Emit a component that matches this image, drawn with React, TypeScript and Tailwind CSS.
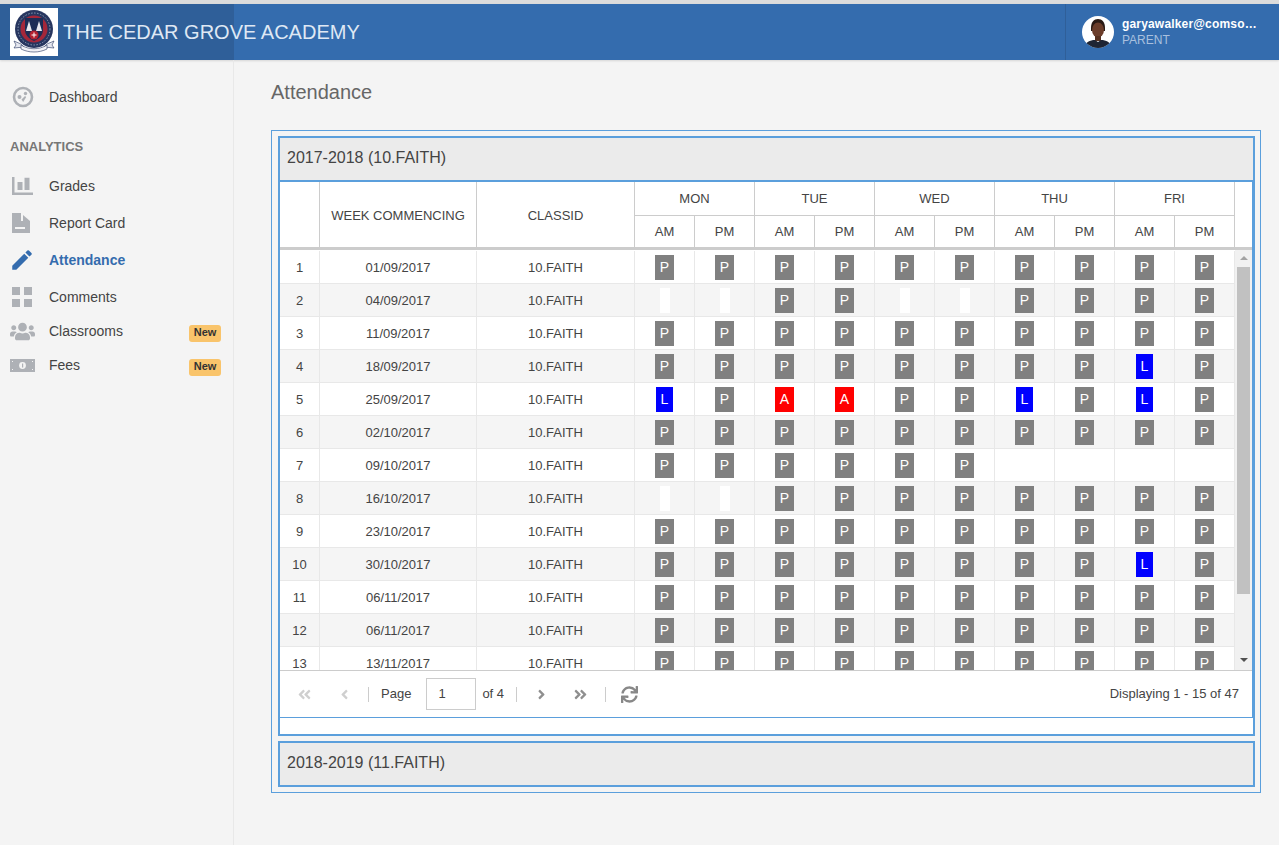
import type { ReactNode } from "react";
import { FaAngleDoubleLeft, FaAngleDoubleRight, FaAngleLeft, FaAngleRight, FaSync, FaUsers } from "react-icons/fa";
import { MdEdit } from "react-icons/md";

type Mark = "P" | "L" | "A" | "" | null;

const P: Mark[] = ["P", "P", "P", "P", "P", "P", "P", "P", "P", "P"];

const rows: { date: string; marks: Mark[] }[] = [
  { date: "01/09/2017", marks: P },
  { date: "04/09/2017", marks: ["", "", "P", "P", "", "", "P", "P", "P", "P"] },
  { date: "11/09/2017", marks: P },
  { date: "18/09/2017", marks: ["P", "P", "P", "P", "P", "P", "P", "P", "L", "P"] },
  { date: "25/09/2017", marks: ["L", "P", "A", "A", "P", "P", "L", "P", "L", "P"] },
  { date: "02/10/2017", marks: P },
  { date: "09/10/2017", marks: ["P", "P", "P", "P", "P", "P", null, null, null, null] },
  { date: "16/10/2017", marks: ["", "", "P", "P", "P", "P", "P", "P", "P", "P"] },
  { date: "23/10/2017", marks: P },
  { date: "30/10/2017", marks: ["P", "P", "P", "P", "P", "P", "P", "P", "L", "P"] },
  { date: "06/11/2017", marks: P },
  { date: "06/11/2017", marks: P },
  { date: "13/11/2017", marks: P },
];

const days = ["MON", "TUE", "WED", "THU", "FRI"];

const markColor = (m: Mark) => {
  if (m === "L") return "bg-[#0000ff]";
  if (m === "A") return "bg-[#ff0000]";
  if (m === "") return "bg-white";
  return "bg-[#808080]";
};

const Crest = () => (
  <svg viewBox="0 0 48 48" className="h-12 w-12 shrink-0 bg-white">
    <circle cx="24" cy="21" r="19" fill="#27365f" />
    <circle cx="24" cy="21" r="16" fill="none" stroke="#9fb0c8" strokeWidth=".8" strokeDasharray="1.5 1.5" />
    <circle cx="24" cy="21" r="13.5" fill="#a5273a" />
    <path d="M15 10h18v12c0 6-5 9-9 11-4-2-9-5-9-11z" fill="#1d2c55" />
    <path d="M19 13l3 10h-6zM29 13l3 10h-6z" fill="#e8e8ee" />
    <circle cx="24" cy="27" r="4.5" fill="#b3202f" />
    <path d="M24 24.5v5M21.5 27h5" stroke="#fff" strokeWidth="1" />
    <path d="M4 33l7 3 3 3-10 1 2-3zM44 33l-7 3-3 3 10 1-2-3z" fill="#e4e6ee" stroke="#27365f" strokeWidth=".6" />
    <path d="M11 37c8 5 18 5 26 0v4c-8 4-18 4-26 0z" fill="#f2f2f6" stroke="#27365f" strokeWidth=".6" />
  </svg>
);

const Avatar = () => (
  <svg viewBox="0 0 32 32" className="h-8 w-8 shrink-0 rounded-full bg-white">
    <path d="M9 12c0-6 3-9 7-9s7 3 7 9v3H9z" fill="#2a1a14" />
    <ellipse cx="16" cy="14" rx="6" ry="7.5" fill="#6b3d2a" />
    <path d="M13 20h6v5h-6z" fill="#55301f" />
    <path d="M3 32c0-6 5-8 10-8l3 2 3-2c5 0 10 2 10 8z" fill="#1e2433" />
  </svg>
);

const DashIcon = () => (
  <svg viewBox="0 0 22 22" className="h-[22px] w-[22px]">
    <circle cx="11" cy="11" r="9" fill="none" stroke="#aeb1b6" strokeWidth="2.6" />
    <circle cx="7.5" cy="11" r="2" fill="#aeb1b6" />
    <circle cx="13.5" cy="7.5" r="1.7" fill="#aeb1b6" />
    <path d="M9.5 13.5l3.5-3.5 1.2 1-3 5z" fill="#aeb1b6" />
  </svg>
);

const GradesIcon = () => (
  <svg viewBox="0 0 21 18" className="h-[18px] w-[21px]" fill="#aeb1b6">
    <path d="M0 0h2.5v15.5H21V18H0z" />
    <path d="M5.5 5h5v8h-5zM12.5 .8h5V13h-5z" />
  </svg>
);

const ReportIcon = () => (
  <svg viewBox="0 0 18 20" className="h-5 w-[18px]" fill="#aeb1b6">
    <path d="M0 0h9v8h9v12H0zM3 14v2h10v-2z" fillRule="evenodd" />
    <path d="M11 2l7 6h-7z" />
  </svg>
);

const GridIcon = () => (
  <svg viewBox="0 0 20 20" className="h-5 w-5" fill="#aeb1b6">
    <path d="M0 0h8v8H0zM12 0h8v8h-8zM0 12h8v8H0zM12 12h8v8h-8z" />
  </svg>
);

const FeesIcon = () => (
  <svg viewBox="0 0 25 13" className="h-[13px] w-[25px]">
    <rect width="25" height="13" fill="#aeb1b6" />
    <circle cx="12.5" cy="6.5" r="3.4" fill="#f4f4f4" />
    <path d="M12 4.5h1.2v4H12z" fill="#aeb1b6" />
    <path d="M2 2h1v1H2zM22 2h1v1h-1zM2 10h1v1H2zM22 10h1v1h-1z" fill="#f4f4f4" />
  </svg>
);

const NavItem = ({ icon, label, active, isNew, tall }: { icon: ReactNode; label: string; active?: boolean; isNew?: boolean; tall?: boolean }) => (
  <div className={`flex items-center pr-[12px] pl-[10px] text-sm ${tall ? "h-[37px]" : "h-[34px]"}`}>
    <div className="flex w-[39px] shrink-0 items-center pl-[2px]">{icon}</div>
    <span className={active ? "font-bold text-[#346cae]" : "text-[#444]"}>{label}</span>
    {isNew && (
      <span className="mt-1 ml-auto flex h-[17px] w-8 items-center justify-center rounded-[3px] bg-[#f9c46b] text-[11px] font-bold text-[#333]">New</span>
    )}
  </div>
);

const Sidebar = () => (
  <aside className="w-[234px] shrink-0 border-r border-[#e8e8e8] pt-[18px]">
    <NavItem tall label="Dashboard" icon={<DashIcon />} />
    <div className="mt-[23px] mb-[11px] pl-[10px] text-[13px] leading-[18px] font-bold text-[#777]">ANALYTICS</div>
    <NavItem tall label="Grades" icon={<GradesIcon />} />
    <NavItem tall label="Report Card" icon={<ReportIcon />} />
    <NavItem tall active label="Attendance" icon={<MdEdit className="-ml-[3px] text-[26px] text-[#346cae]" />} />
    <NavItem tall label="Comments" icon={<GridIcon />} />
    <div className="-mt-[1px]">
      <NavItem isNew label="Classrooms" icon={<FaUsers className="-ml-[2px] text-[25px] text-[#aeb1b6]" />} />
      <NavItem isNew label="Fees" icon={<div className="-ml-[2px]"><FeesIcon /></div>} />
    </div>
  </aside>
);

const Cols = () => (
  <colgroup>
    <col className="w-[40px]" />
    <col className="w-[157px]" />
    <col className="w-[158px]" />
    {Array.from({ length: 10 }).map((_, i) => (
      <col key={i} className="w-[60px]" />
    ))}
  </colgroup>
);

const AttendanceTable = () => (
  <div className="border-r border-b border-[#5b9fdc] bg-white">
    <div className="flex">
      <div className="min-w-0 flex-1">
        <table className="w-[955px] table-fixed border-separate border-spacing-0 text-[13px] text-[#444]">
          <Cols />
          <thead>
            <tr className="h-[34px]">
              <th rowSpan={2} className="border-r border-b-[3px] border-[#ccc]" />
              <th rowSpan={2} className="border-r border-b-[3px] border-[#ccc] pt-[2px] font-normal">WEEK COMMENCING</th>
              <th rowSpan={2} className="border-r border-b-[3px] border-[#ccc] pt-[2px] font-normal">CLASSID</th>
              {days.map((d) => (
                <th key={d} colSpan={2} className="border-r border-b border-[#ccc] pt-px font-normal">{d}</th>
              ))}
            </tr>
            <tr className="h-[34px]">
              {days.flatMap((d) => ["AM", "PM"].map((t) => (
                <th key={d + t} className="border-r border-b-[3px] border-[#ccc] font-normal">{t}</th>
              )))}
            </tr>
          </thead>
        </table>
        <div className="h-[420px] overflow-hidden pt-px">
          <table className="w-[955px] table-fixed border-separate border-spacing-0 text-[13px] text-[#444]">
            <Cols />
            <tbody>
              {rows.map((r, i) => (
                <tr key={i} className={`h-[33px] ${i % 2 ? "bg-[#f5f5f5]" : "bg-white"}`}>
                  <td className="border-r border-b border-[#e8e8e8] pt-px text-center">{i + 1}</td>
                  <td className="border-r border-b border-[#e8e8e8] pt-px text-center">{r.date}</td>
                  <td className="border-r border-b border-[#e8e8e8] pt-px text-center">10.FAITH</td>
                  {r.marks.map((m, j) => (
                    <td key={j} className="border-r border-b border-[#e8e8e8] text-center align-middle">
                      {m !== null && (
                        <span className={`inline-block h-[25px] min-w-[10px] px-[5px] align-middle text-sm leading-[25px] text-white ${markColor(m)}`}>{m}</span>
                      )}
                    </td>
                  ))}
                </tr>
              ))}
            </tbody>
          </table>
        </div>
      </div>
      {/* scrollbar column, header part is blank */}
      <div className="flex w-[17px] shrink-0 flex-col">
        <div className="h-[68px] border-b-[3px] border-[#ccc]" />
        <div className="flex h-[420px] flex-col items-center bg-[#f1f1f1]">
          <div className="mt-[6px] h-0 w-0 border-x-[4px] border-b-[4px] border-x-transparent border-b-[#a3a3a3]" />
          <div className="mt-[7px] h-[327px] w-[13px] bg-[#c1c1c1]" />
          <div className="mt-[64px] h-0 w-0 border-x-[4px] border-t-[4px] border-x-transparent border-t-[#505050]" />
        </div>
      </div>
    </div>
    <div className="flex h-[47px] items-center border-t border-[#ccc] pr-[13px] pl-[17px] text-[13px] text-[#444]">
      <FaAngleDoubleLeft className="shrink-0 text-[15px] text-[#cfcfcf]" />
      <FaAngleLeft className="ml-[25px] shrink-0 text-[15px] text-[#cfcfcf]" />
      <div className="mr-[12px] ml-[16px] h-[15px] w-px bg-[#ccc]" />
      <span>Page</span>
      <div className="mr-[6px] ml-[15px] flex h-[32px] w-[50px] items-center border border-[#ccc] pl-[11px]">1</div>
      <span>of 4</span>
      <div className="ml-[12px] h-[15px] w-px bg-[#ccc]" />
      <FaAngleRight className="ml-[17px] shrink-0 text-[15px] text-[#8f8f8f]" />
      <FaAngleDoubleRight className="ml-[24px] shrink-0 text-[15px] text-[#8f8f8f]" />
      <div className="mr-[15px] ml-[17px] h-[15px] w-px bg-[#ccc]" />
      <FaSync className="shrink-0 text-[17px] text-[#888]" />
      <span className="ml-auto">Displaying 1 - 15 of 47</span>
    </div>
  </div>
);

export default function App() {
  return (
    <div className="flex min-h-[845px] flex-col overflow-hidden bg-[#f4f4f4] font-['Liberation_Sans',Arial,sans-serif]">
      <div className="h-[4px] bg-[#dcdcdc]" />
      <header className="flex h-[56px] items-stretch bg-[#346cae] shadow-[0_1px_2px_rgba(0,0,0,0.12)]">
        <div className="flex w-[234px] items-center bg-[#2f5f99] pl-[10px]">
          <Crest />
          <span className="ml-[5px] text-[20px] whitespace-nowrap text-[#dfe8f4]">THE CEDAR GROVE ACADEMY</span>
        </div>
        <div className="ml-auto flex w-[214px] items-center border-l border-[#2f5f99] pl-[16px]">
          <Avatar />
          <div className="ml-2 text-xs leading-[16px]">
            <div className="font-bold tracking-[0.17px] whitespace-nowrap text-white">garyawalker@comso…</div>
            <div className="text-[#a9c0de]">PARENT</div>
          </div>
        </div>
      </header>
      <div className="flex flex-1">
        <Sidebar />
        <main className="min-w-0 flex-1 pt-[20px] pr-[18px] pl-[37px]">
          <h1 className="text-xl leading-[24px] text-[#666]">Attendance</h1>
          <div className="mt-[26px] border border-[#5b9fdc] py-[5px] pr-[5px] pl-[6px]">
            <div className="border-2 border-[#5b9fdc] bg-white pb-[16px]">
              <div className="flex h-[44px] items-center border-b-2 border-[#5b9fdc] bg-[#ebebeb] px-[7px] pb-[2px] text-base text-[#444]">2017-2018 (10.FAITH)</div>
              <AttendanceTable />
            </div>
            <div className="mt-[5px] flex h-[46px] items-center border-2 border-[#5b9fdc] bg-[#ebebeb] px-[7px] pb-[2px] text-base text-[#444]">2018-2019 (11.FAITH)</div>
          </div>
        </main>
      </div>
    </div>
  );
}
